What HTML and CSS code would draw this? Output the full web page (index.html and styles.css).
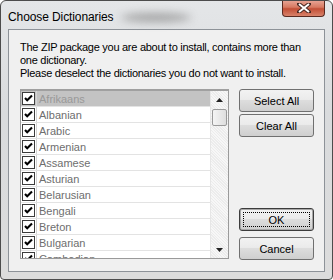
FILE: index.html
```html
<!DOCTYPE html>
<html lang="en">
<head>
    <meta charset="UTF-8">
    <title>Choose Dictionaries</title>
    <link rel="stylesheet" href="styles.css">
</head>
<body>
    <svg class="defs" width="0" height="0">
        <symbol id="chk" viewBox="0 0 13 13">
            <rect x="0.5" y="0.5" width="12" height="12" fill="#fff" stroke="#3c3c3c"/>
            <path d="M3 6 L5.2 8.3 L10 3.5" fill="none" stroke="#000" stroke-width="2.1"/>
        </symbol>
    </svg>

    <div class="window">
        <div class="glow"></div>
        <div class="titlebar">
            <span class="caption">Choose Dictionaries</span>
            <div class="close-btn">
                <svg width="14" height="10" viewBox="0 0 14 10">
                    <path d="M2 1 L12 9 M12 1 L2 9" stroke="#4a2a24" stroke-width="4" stroke-linecap="square"/>
                    <path d="M2 1 L12 9 M12 1 L2 9" stroke="#fff" stroke-width="2"/>
                </svg>
            </div>
        </div>
        <div class="client">
            <p class="intro">The ZIP package you are about to install, contains more than one dictionary.<br>Please deselect the dictionaries you do not want to install.</p>
            <div class="main">
                <div class="listbox">
                    <div class="rows">
                        <div class="row selected"><span class="cb"><svg width="13" height="13"><use href="#chk"/></svg></span><span class="name">Afrikaans</span></div>
                        <div class="row"><span class="cb"><svg width="13" height="13"><use href="#chk"/></svg></span><span class="name">Albanian</span></div>
                        <div class="row"><span class="cb"><svg width="13" height="13"><use href="#chk"/></svg></span><span class="name">Arabic</span></div>
                        <div class="row"><span class="cb"><svg width="13" height="13"><use href="#chk"/></svg></span><span class="name">Armenian</span></div>
                        <div class="row"><span class="cb"><svg width="13" height="13"><use href="#chk"/></svg></span><span class="name">Assamese</span></div>
                        <div class="row"><span class="cb"><svg width="13" height="13"><use href="#chk"/></svg></span><span class="name">Asturian</span></div>
                        <div class="row"><span class="cb"><svg width="13" height="13"><use href="#chk"/></svg></span><span class="name">Belarusian</span></div>
                        <div class="row"><span class="cb"><svg width="13" height="13"><use href="#chk"/></svg></span><span class="name">Bengali</span></div>
                        <div class="row"><span class="cb"><svg width="13" height="13"><use href="#chk"/></svg></span><span class="name">Breton</span></div>
                        <div class="row"><span class="cb"><svg width="13" height="13"><use href="#chk"/></svg></span><span class="name">Bulgarian</span></div>
                        <div class="row"><span class="cb"><svg width="13" height="13"><use href="#chk"/></svg></span><span class="name">Cambodian</span></div>
                    </div>
                    <div class="scrollbar">
                        <div class="arrow"><svg width="7" height="4"><path d="M0 4 L3.5 0 L7 4 Z" fill="#222"/></svg></div>
                        <div class="thumb"></div>
                        <div class="track"></div>
                        <div class="arrow"><svg width="7" height="4"><path d="M0 0 L3.5 4 L7 0 Z" fill="#222"/></svg></div>
                    </div>
                </div>
                <div class="buttons">
                    <button class="btn">Select All</button>
                    <button class="btn">Clear All</button>
                    <button class="btn default spaced"><span class="focus">OK</span></button>
                    <button class="btn">Cancel</button>
                </div>
            </div>
        </div>
    </div>
</body>
</html>
```

FILE: styles.css
```css
body {
    margin: 0;
    font-family: "Liberation Sans", Arial, sans-serif;
    background: #fff;
}
.defs {
    position: absolute;
    width: 0;
    height: 0;
}
.window {
    position: relative;
    box-sizing: border-box;
    width: 333px;
    height: 280px;
    padding: 0 7px 7px 7px;
    border: 1px solid #4c4c4c;
    border-radius: 6px 6px 4px 4px;
    background: linear-gradient(#e4e6e8, #d9dbdd 40%, #dcdcdc);
    display: flex;
    flex-direction: column;
    overflow: hidden;
}
.glow {
    position: absolute;
    left: 120px;
    top: 12px;
    width: 70px;
    height: 9px;
    border-radius: 50%;
    background: #8a8a8a;
    filter: blur(4px);
    opacity: 0.7;
}
.titlebar {
    position: relative;
    height: 28px;
    display: flex;
    justify-content: space-between;
    align-items: flex-start;
}
.caption {
    font-size: 12px;
    color: #000;
    margin-top: 9px;
    letter-spacing: -0.1px;
}
.close-btn {
    width: 43px;
    height: 17px;
    margin-top: -1px;
    box-sizing: border-box;
    border: 1px solid #5a2a20;
    border-top: none;
    border-radius: 0 0 4px 4px;
    background: linear-gradient(#e9a99a, #d77a62 45%, #c24f36 55%, #d8826a);
    display: flex;
    justify-content: center;
    align-items: center;
}
.client {
    flex: 1;
    background: #f0f0f0;
    border: 1px solid #8d9298;
    padding: 11px 8px 0 11px;
}
.intro {
    margin: 0;
    font-size: 11px;
    line-height: 13px;
    letter-spacing: -0.27px;
    color: #000;
}
.main {
    display: flex;
    gap: 10px;
    margin-top: 9px;
}
.listbox {
    width: 209px;
    height: 170px;
    box-sizing: border-box;
    border: 1px solid #9a9a9a;
    border-top: 2px solid #a0a0a0;
    background: #fff;
    display: flex;
    overflow: hidden;
}
.rows {
    flex: 1;
    overflow: hidden;
}
.row {
    height: 15px;
    border-bottom: 1px solid #e3e3e3;
    display: flex;
    align-items: center;
    font-size: 11px;
    color: #6e6e6e;
}
.row.selected {
    background: #c3c3c3;
    color: #999;
}
.cb {
    width: 16px;
    height: 15px;
    box-sizing: border-box;
    border-right: 1px solid #d4d4d4;
    padding-left: 1px;
    display: flex;
    align-items: center;
}
.name {
    padding-left: 2px;
}
.scrollbar {
    width: 17px;
    display: flex;
    flex-direction: column;
    background: repeating-linear-gradient(45deg, #ececec 0 1px, #f7f7f7 1px 2px);
    border-left: 1px solid #e6e6e6;
}
.arrow {
    height: 17px;
    display: flex;
    justify-content: center;
    align-items: center;
}
.thumb {
    height: 15px;
    margin: 1px 1px 0 1px;
    border: 1px solid #9a9a9a;
    border-radius: 2px;
    background: linear-gradient(90deg, #f4f4f4, #dedede);
}
.track {
    flex: 1;
}
.buttons {
    width: 75px;
    display: flex;
    flex-direction: column;
    gap: 2px;
}
.btn {
    height: 23px;
    box-sizing: border-box;
    border: 1px solid #707070;
    border-radius: 3px;
    background: linear-gradient(#f2f2f2, #ebebeb 45%, #dddddd 50%, #cfcfcf);
    font-family: "Liberation Sans", Arial, sans-serif;
    font-size: 11px;
    color: #000;
    padding: 0;
}
.btn.default {
    border: 1px solid #3c3c3c;
    box-shadow: inset 0 0 0 1px #a8a8a8;
    padding: 3px;
}
.btn.spaced {
    margin-top: 69px;
    margin-bottom: 4px;
}
.focus {
    display: flex;
    justify-content: center;
    align-items: center;
    height: 100%;
    border: 1px dotted #000;
    box-sizing: border-box;
}
```
